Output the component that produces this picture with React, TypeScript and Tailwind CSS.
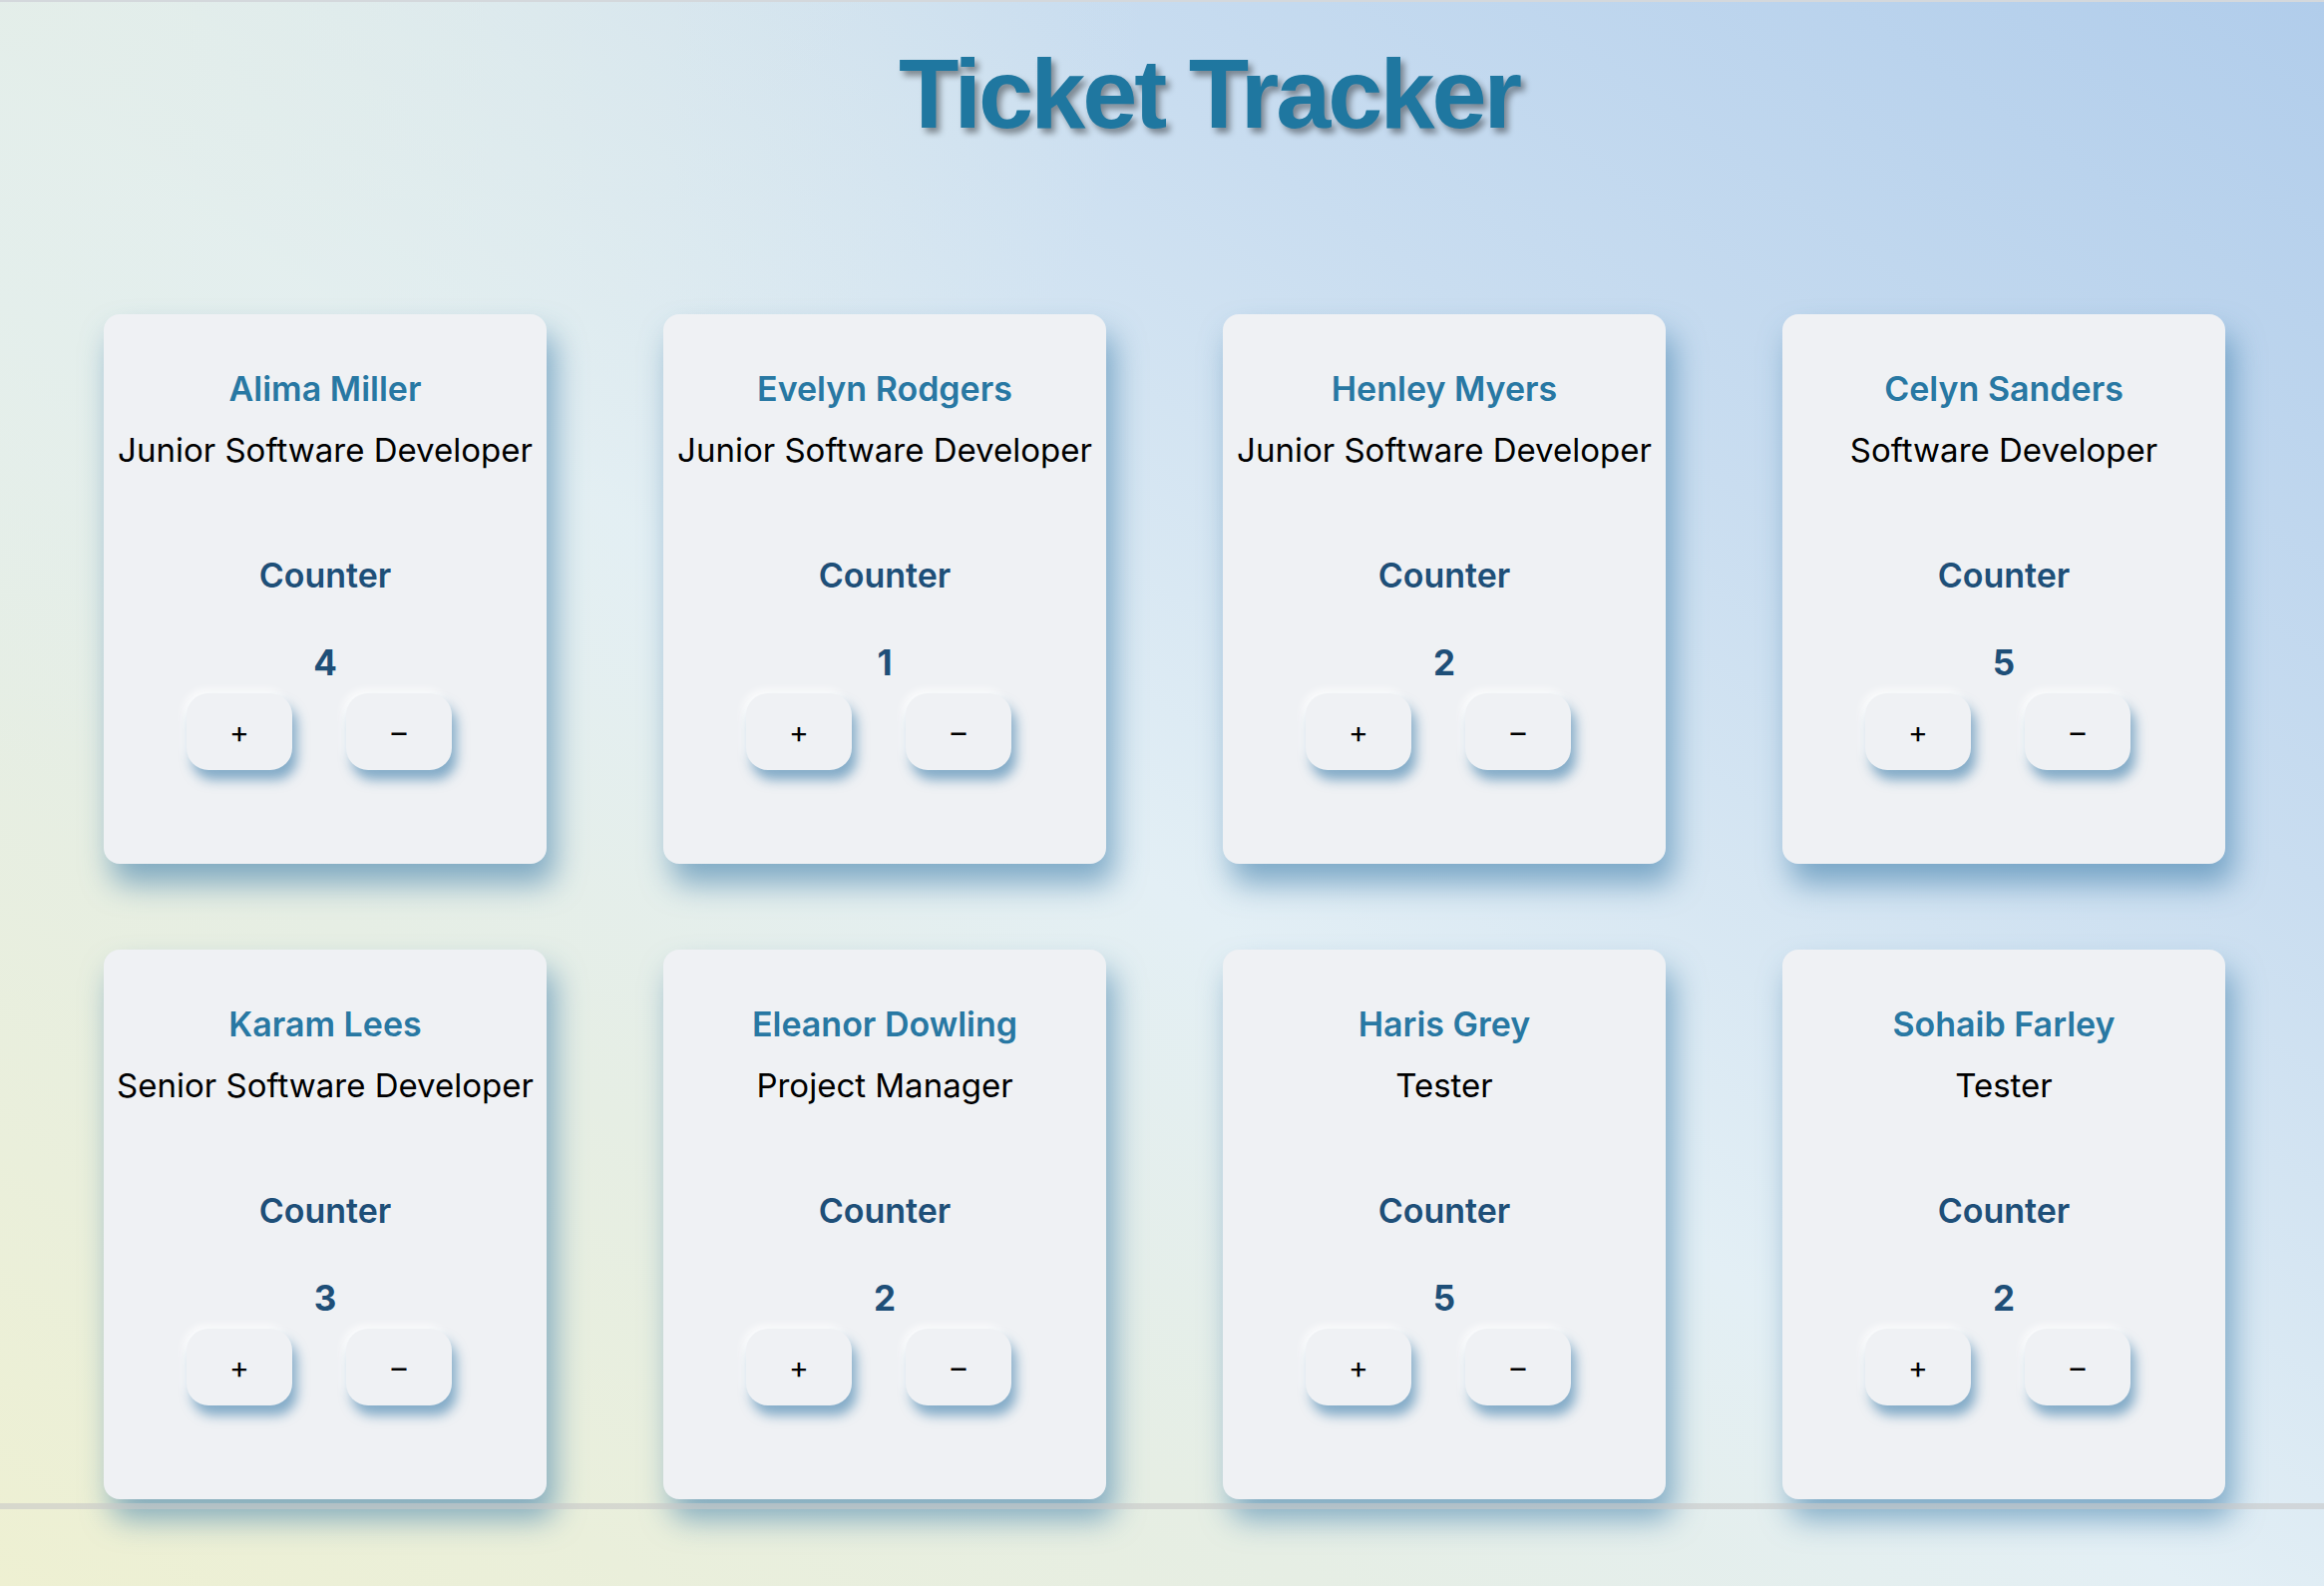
import React, { useState } from 'react';

type Member = { name: string; role: string; count: number };

const members: Member[] = [
  { name: 'Alima Miller', role: 'Junior Software Developer', count: 4 },
  { name: 'Evelyn Rodgers', role: 'Junior Software Developer', count: 1 },
  { name: 'Henley Myers', role: 'Junior Software Developer', count: 2 },
  { name: 'Celyn Sanders', role: 'Software Developer', count: 5 },
  { name: 'Karam Lees', role: 'Senior Software Developer', count: 3 },
  { name: 'Eleanor Dowling', role: 'Project Manager', count: 2 },
  { name: 'Haris Grey', role: 'Tester', count: 5 },
  { name: 'Sohaib Farley', role: 'Tester', count: 2 },
];

const btnClass =
  "w-[106px] h-[77px] rounded-[22px] bg-[#eff1f4] text-black text-[30px] leading-none flex items-center justify-center shadow-[5px_10px_12px_rgba(60,125,170,0.6),-3px_-3px_8px_rgba(255,255,255,0.9)]";

const MemberCard = ({ member }: { member: Member }) => {
  const [count, setCount] = useState(member.count);

  return (
    <div className="h-[551px] rounded-[16px] bg-[#eff1f4] shadow-[8px_20px_30px_rgba(60,125,170,0.6)] flex flex-col items-center pt-[56px] font-['Inter',sans-serif]">
      <h2 className="text-[34px] leading-[38px] font-semibold text-[#2878a3] whitespace-nowrap">{member.name}</h2>
      <p className="mt-[23px] text-[33px] leading-[38px] text-black whitespace-nowrap">{member.role}</p>
      <h3 className="mt-[87px] text-[34px] leading-[40px] font-semibold text-[#1e4f78]">Counter</h3>
      <div className="mt-[46px] text-[35px] leading-[42px] font-bold text-[#1e4f78]">{count}</div>
      <div className="mt-[10px] flex gap-[54px] pr-[12px]">
        <button onClick={() => setCount(count + 1)} className={btnClass}>+</button>
        <button onClick={() => setCount(count - 1)} className={btnClass}>–</button>
      </div>
    </div>
  );
};

export default function App() {
  return (
    <div className="relative min-h-screen w-full border-t-2 border-[#d4d8dc] bg-[radial-gradient(ellipse_at_0%_0%,rgba(228,238,232,0.9)_0%,rgba(228,238,232,0)_35%),linear-gradient(to_top_right,#eef0d2_0%,#e6eee4_28%,#e3eff5_47%,#c9ddf0_72%,#b1cdeb_100%)]">
      <header className="h-[313px] pl-[94px] pt-[36px] flex justify-center">
        <h1 className="text-[99px] leading-[112px] font-bold tracking-[-3px] text-[#1f77a0] font-['Liberation_Sans',Arial,sans-serif] [text-shadow:4px_5px_6px_rgba(0,0,0,0.4)]">
          Ticket Tracker
        </h1>
      </header>
      <main className="pl-[104px] grid grid-cols-[repeat(4,444px)] gap-x-[117px] gap-y-[86px]">
        {members.map(m => (
          <MemberCard key={m.name} member={m} />
        ))}
      </main>
      <div className="absolute inset-x-0 top-[1505px] h-[6px] bg-[#c8c8c8]/60 z-10" />
    </div>
  );
}
